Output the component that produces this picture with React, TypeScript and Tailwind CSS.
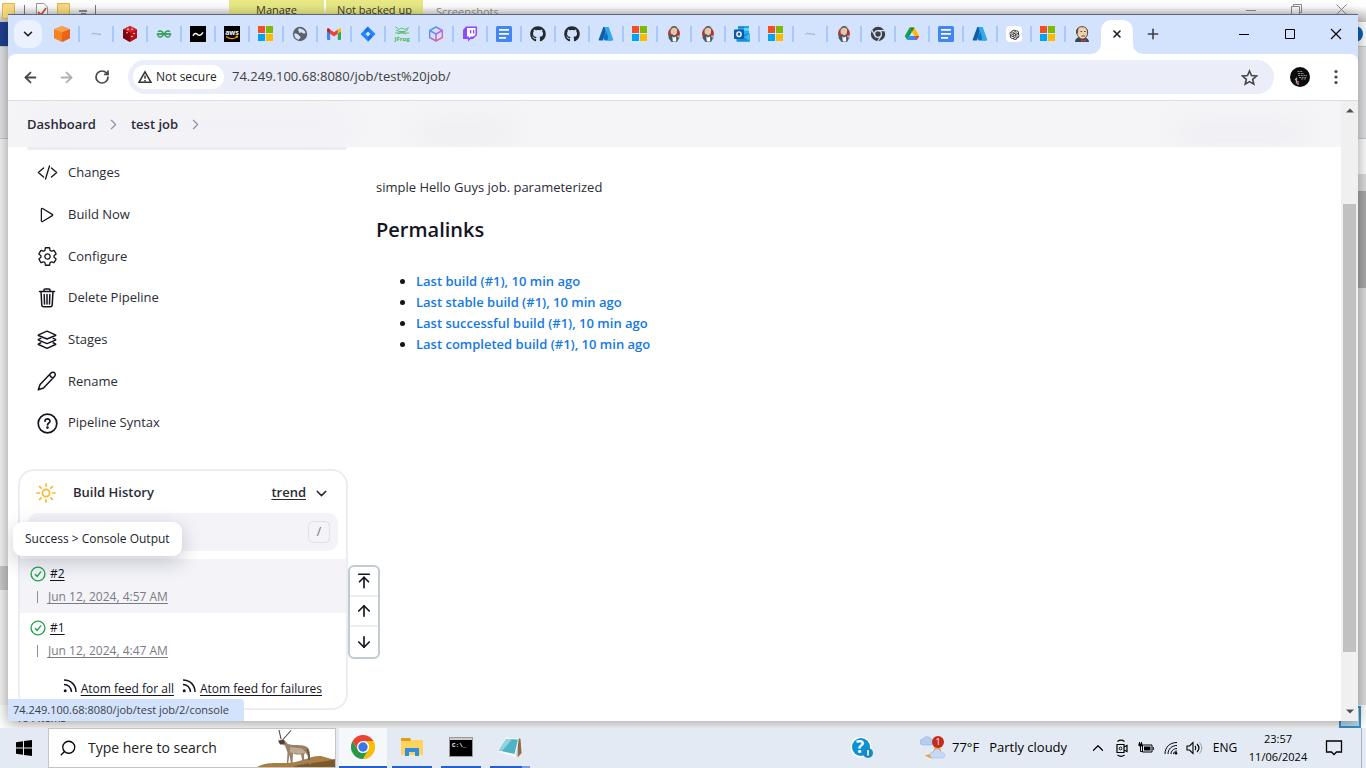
import React from "react";
import { FaGithub } from "react-icons/fa";
import { AiOutlineOpenAI } from "react-icons/ai";
import { IoCodeSlashOutline, IoPlayOutline, IoSettingsOutline } from "react-icons/io5";
import {
  ArrowDown,
  ArrowLeft,
  ArrowRight,
  ArrowUp,
  ArrowUpToLine,
  ChevronDown,
  ChevronRight,
  ChevronUp,
  Minus,
  Plus,
  RotateCw,
  Search,
  X,
} from "lucide-react";

/* ---------- favicons ---------- */

const OrangeCube = () => (
  <svg width="16" height="16" viewBox="0 0 16 16">
    <path d="M8 0l8 3.2v9L8 16l-8-3.800v-9z" fill="#f58220" />
    <path d="M8 0l8 3.200L8 6.500 0 3.200z" fill="#fba047" />
    <path d="M8 6.500l8-3.300v9L8 16z" fill="#e8641b" />
  </svg>
);
const Scribble = () => (
  <svg width="16" height="16" viewBox="0 0 16 16" fill="none" stroke="#7fb0bd" strokeWidth="1">
    <path d="M3.500 8.500l2-1.500 1 1 2-.5 1 .8 2-.4 1.500 1" />
  </svg>
);
const RedCube = () => (
  <svg width="16" height="16" viewBox="0 0 16 16">
    <path d="M8 0l7 3.500v8.500L8 16l-7-4V3.500z" fill="#b80f14" />
    <path d="M8 0l7 3.500L9 6.500 1 3.500z" fill="#d8232a" />
    <path d="M1 3.500L8 7v9l-7-4z" fill="#7b060b" />
    <g fill="#fff">
      <circle cx="6" cy="3.400" r=".8" />
      <circle cx="10" cy="3.200" r=".8" />
      <circle cx="5" cy="6.800" r=".7" />
      <circle cx="12" cy="7.500" r=".8" />
      <circle cx="10" cy="10.500" r=".8" />
    </g>
  </svg>
);
const Geeks = () => (
  <svg width="16" height="16" viewBox="0 0 16 16" fill="none" stroke="#2f9e55" strokeWidth="1.400">
    <path d="M2 5.800C3.500 4.300 7.300 5 7.300 8S3.500 11.700 2.500 10.300C2 9.500 1.900 8.700 2 8h12c.1.700 0 1.500-.5 2.300-1 1.400-4.800.7-4.800-2.300S12.500 4.300 14 5.800" />
    <path d="M.5 8h15" strokeWidth="1" />
  </svg>
);
const BlackWave = () => (
  <svg width="16" height="16" viewBox="0 0 16 16">
    <path d="M0 0h16v16H0z" />
    <path d="M3 9.800c1.500-2.800 3-2.800 4.500-1.300s3.500 1 5.500-2.200" fill="none" stroke="#fff" strokeWidth="1.400" />
  </svg>
);
const Aws = () => (
  <svg width="16" height="16" viewBox="0 0 16 16">
    <path d="M0 0h16v16H0z" />
    <text x="8" y="8.500" textAnchor="middle" fontSize="7" fontWeight="700" fill="#fff" fontFamily="Open Sans, sans-serif">
      aws
    </text>
    <path d="M2 10.500c3.500 2.500 8 2.500 11 .5M11.500 10.200l2-.2-.4 1.800" fill="none" stroke="#f90" strokeWidth="1.100" />
  </svg>
);
const Microsoft = () => (
  <svg width="16" height="16" viewBox="0 0 16 16">
    <path d="M0 0h7v7H0z" fill="#f25022" />
    <path d="M8 0h7v7H8z" fill="#7fba00" />
    <path d="M0 8h7v7H0z" fill="#00a4ef" />
    <path d="M8 8h7v7H8z" fill="#ffb900" />
  </svg>
);
const Globe = () => (
  <svg width="16" height="16" viewBox="0 0 16 16">
    <circle cx="8" cy="8" r="7.200" fill="#5f6368" />
    <path d="M7 2.200c3 .3 5.500 1.500 6.500 4.500-1 1.500-2 .8-3 .2-1.500-.8-3.500.5-3.500-1s-1-1.200-1-2zM2.200 7.500c1.500.2 3.500 0 4.300 1.500.8 1.300 2.200 1 2 2.500-.3 1.300-1.500.8-1.700 2.300C4 13 2 11 2.200 7.500z" fill="#d3e3fd" />
  </svg>
);
const Gmail = () => (
  <svg width="16" height="16" viewBox="0 0 16 16">
    <path d="M1 4.500l3.200 2.400V14H2a1 1 0 01-1-1z" fill="#4285f4" />
    <path d="M15 4.500l-3.200 2.400V14H14a1 1 0 001-1z" fill="#34a853" />
    <path d="M11.800 3.500L13 2.600c.9-.6 2 0 2 1v1.700l-3.200 2.400z" fill="#fbbc04" />
    <path d="M4.200 7.700V3.500L8 6.300l3.800-2.800v4.200L8 10.500z" fill="#ea4335" />
    <path d="M1 5.300V3.600c0-1 1.100-1.600 2-1l1.200.9v4.200z" fill="#c5221f" />
  </svg>
);
const Jira = () => (
  <svg width="16" height="16" viewBox="0 0 16 16">
    <path d="M8 .5L15.500 8 8 15.500.5 8z" fill="#2684ff" />
    <path d="M8 .5L4.200 4.300 8 8.200l1.500-1.500zM8 15.500V11l3-3 1 3.500z" fill="#1a6fe6" />
    <path d="M8 5.500L10.500 8 8 10.500 5.500 8z" fill="#d3e3fd" />
  </svg>
);
const JFrog = () => (
  <svg width="16" height="16" viewBox="0 0 16 16">
    <path d="M1 .5l4 3 3-1.500L11 3.500l4-2M2 4l3 1.500h6l3-2M1 7h14M4 8l4-2 4 2" fill="none" stroke="#43b649" strokeWidth=".8" />
    <text x="8" y="14.500" textAnchor="middle" fontSize="6" fontWeight="700" fill="#43b649" fontFamily="Open Sans, sans-serif">
      JFrog
    </text>
  </svg>
);
const GradientCube = () => (
  <svg width="16" height="16" viewBox="0 0 16 16" fill="none" strokeWidth="1.500" strokeLinejoin="round">
    <defs>
      <linearGradient id="cube" x1="0" y1="0" x2="1" y2="1">
        <stop offset="0" stopColor="#22b8e6" />
        <stop offset=".5" stopColor="#a56bf5" />
        <stop offset="1" stopColor="#ff6a5a" />
      </linearGradient>
    </defs>
    <path d="M8 1l6.300 3.500v7L8 15l-6.300-3.500v-7zM1.700 4.500L8 8l6.300-3.500M8 8v7" stroke="url(#cube)" />
  </svg>
);
const Twitch = () => (
  <svg width="16" height="16" viewBox="0 0 16 16">
    <path d="M4 .5h11v8.500l-4 4H8.500L6 15.500V13H1V4z" fill="#9146ff" />
    <path d="M5 2h8.500v6.500l-2 2H9L7 12.300v-1.800H5z" fill="#fff" />
    <path d="M8 4h1.300v3.500H8zM11 4h1.300v3.500H11z" fill="#9146ff" />
  </svg>
);
const Docs = () => (
  <svg width="16" height="16" viewBox="0 0 16 16">
    <rect width="16" height="16" rx="1.500" fill="#4285f4" />
    <path d="M3 3h10v1.700H3zM3 7h10v1.700H3zM3 11h7v1.700H3z" fill="#fff" />
  </svg>
);
const GitHub = () => <FaGithub size={16} color="#24292f" />;
const Azure = () => (
  <svg width="16" height="16" viewBox="0 0 16 16">
    <path d="M5.300 1h4.200L5 14.500H1.500a.8.800 0 01-.8-1z" fill="#0f5ea8" />
    <path d="M5 10h6l3 4.500H6.500z" fill="#0078d4" />
    <path d="M6.500 1h4.200l4.500 12.500c.2.500-.2 1-.7 1h-4.300L8 7z" fill="#32a9e8" />
    <path d="M8.300 5.500l2 6.500-4.300-.7z" fill="#0f6cbd" />
  </svg>
);
const JenkinsRed = () => (
  <svg width="16" height="16" viewBox="0 0 16 16">
    <ellipse cx="8" cy="7.500" rx="6" ry="6" fill="#b8332c" />
    <ellipse cx="7.800" cy="5" rx="3.300" ry="4.400" fill="#e3c6ad" />
    <path d="M4.300 6C3.800 1.500 6 0 8 0s4.700 1 4 6c-.5-3-1.500-4-4-4.200C6 1.800 4.800 3.500 4.300 6z" fill="#6b625c" />
    <path d="M3 9l3-1 2.500 2L12 8.500l1.500 3L11 16H5.500L2.500 12z" fill="#4c5767" />
    <path d="M6.300 10.500l1.700 1 2-1 .3 5H6.800z" fill="#fff" />
    <path d="M10.500 10l3-1v4z" fill="#a9aeb6" />
  </svg>
);
const Outlook = () => (
  <svg width="16" height="16" viewBox="0 0 16 16">
    <path d="M4 .5h11v8H4z" fill="#28a8ea" />
    <path d="M10 .5h5V5h-5z" fill="#50d9ff" />
    <path d="M4 .5h11v1H4z" fill="#0364b8" />
    <path d="M2.500 9L16 7.500v7.500a.8.800 0 01-.8.800H3.300a.8.800 0 01-.8-.8z" fill="#1490df" />
    <path d="M10 11l6-3.500V15z" fill="#35b8f1" />
    <rect y="3.500" width="10" height="9.500" rx=".8" fill="#0a5aa8" />
    <ellipse cx="5" cy="8.200" rx="2.100" ry="2.300" fill="none" stroke="#fff" strokeWidth="1.400" />
  </svg>
);
const ChromeMono = () => (
  <svg width="16" height="16" viewBox="0 0 16 16">
    <circle cx="8" cy="8" r="7.200" fill="#3c4043" />
    <circle cx="8" cy="8" r="3.400" fill="none" stroke="#d3e3fd" strokeWidth="1.300" />
    <path d="M8 4.600h6.500M5 9.700L1.900 4.300M11 9.700l-3.200 5.500" stroke="#d3e3fd" strokeWidth="1.200" />
  </svg>
);
const Drive = () => (
  <svg width="16" height="16" viewBox="0 0 16 16">
    <path d="M5.600 1.500L8 5.700 3.200 14 .8 10z" fill="#0f9d58" />
    <path d="M5.600 1.500h4.800L15.200 10h-4.800z" fill="#fbbc04" />
    <path d="M5.600 1.500h4.800L8 5.700z" fill="#188038" />
    <path d="M3.200 14l2.400-4h9.600l-2.400 4z" fill="#4285f4" />
    <path d="M10.400 10h4.800l-2.400 4z" fill="#ea4335" />
  </svg>
);
const OpenAI = () => (
  <span className="flex size-4 items-center justify-center rounded-sm bg-white">
    <AiOutlineOpenAI size={13} color="#222" />
  </span>
);
const JenkinsMan = () => (
  <svg width="16" height="16" viewBox="0 0 16 16">
    <path d="M1 16c0-3 2-4.500 5-5l5 .500c2.500 1 4 2 4 4.500z" fill="#33495a" />
    <path d="M2.500 5.500C2.500 2.500 5 .6 8 .6c3.800 0 5.600 2.500 5.600 5.500 0 4-2 7-5.100 7S2.500 9 2.500 5.500z" fill="#eed0ac" stroke="#4a3c34" strokeWidth=".9" />
    <path d="M2.200 8V4.500L4.500 1.800 4 7zM13 3l1.200 4-1.200 2z" fill="#5b5048" />
    <path d="M6.500 5.500h1.700M10 5.500h1.700M7.500 10h3.500" stroke="#4a3c34" strokeWidth=".9" />
    <path d="M7 13l2.500 1.200L12 13v2.800L9.500 15 7 15.800z" fill="#d33833" />
  </svg>
);

const TABS: { name: string; icon: () => React.ReactElement }[] = [
  { name: "AWS resources", icon: OrangeCube },
  { name: "Docs site", icon: Scribble },
  { name: "Redis", icon: RedCube },
  { name: "GeeksforGeeks", icon: Geeks },
  { name: "Wave", icon: BlackWave },
  { name: "AWS", icon: Aws },
  { name: "Microsoft", icon: Microsoft },
  { name: "Web page", icon: Globe },
  { name: "Gmail", icon: Gmail },
  { name: "Jira", icon: Jira },
  { name: "JFrog", icon: JFrog },
  { name: "Cube", icon: GradientCube },
  { name: "Twitch", icon: Twitch },
  { name: "Google Docs", icon: Docs },
  { name: "GitHub", icon: GitHub },
  { name: "GitHub", icon: GitHub },
  { name: "Azure", icon: Azure },
  { name: "Microsoft", icon: Microsoft },
  { name: "Jenkins", icon: JenkinsRed },
  { name: "Jenkins", icon: JenkinsRed },
  { name: "Outlook", icon: Outlook },
  { name: "Microsoft", icon: Microsoft },
  { name: "Docs site", icon: Scribble },
  { name: "Jenkins", icon: JenkinsRed },
  { name: "Chrome Web Store", icon: ChromeMono },
  { name: "Google Drive", icon: Drive },
  { name: "Google Docs", icon: Docs },
  { name: "Azure", icon: Azure },
  { name: "ChatGPT", icon: OpenAI },
  { name: "Microsoft", icon: Microsoft },
  { name: "Jenkins", icon: JenkinsMan },
];

/* ---------- file manager behind the browser ---------- */

const Folder = () => (
  <svg width="14" height="16" viewBox="0 0 14 16" className="shrink-0">
    <path d="M.5.500h12v11l1 1v3H.500z" fill="#fbdc83" stroke="#e0b64e" />
  </svg>
);

function FileManager() {
  return (
    <div className="absolute inset-0 bottom-10 flex flex-col bg-white">
      <div className="flex h-[22px] items-start bg-gradient-to-b from-white from-30% to-[#c4c4c4] text-[11px] leading-5 text-[#3a3a2a]">
        <div className="flex w-[229px] items-start gap-[8px] pt-[3px] pl-[2px]">
          <Folder />
          <span className="mt-[2px] h-3 w-px bg-[#777]" />
          <svg width="14" height="16" viewBox="0 0 14 16" className="ml-[2px]">
            <path d="M1.500.500h7.500l3.500 3.500v12h-11z" fill="#fff" stroke="#999" />
            <path d="M3 9l3 3 5-7" fill="none" stroke="#d8502a" strokeWidth="1.800" />
          </svg>
          <Folder />
          <svg width="8" height="10" viewBox="0 0 8 10" className="mt-[6px]">
            <path d="M0 2h8M2 5h5" stroke="#222" strokeWidth="1.200" />
          </svg>
          <span className="mt-[2px] h-3 w-px bg-[#777]" />
        </div>
        <div className="h-full w-[95px] bg-[#e9ea86] text-center">Manage</div>
        <div className="ml-[2px] h-full w-[97px] bg-[#e9ea86] text-center">Not backed up</div>
        <div className="ml-[13px] pt-[2px] text-[#8c8c8c]">Screenshots</div>
        <div className="ml-auto flex items-center gap-[34px] pt-1 pr-[19px] text-[#8a8a8a]">
          <svg width="11" height="11" viewBox="0 0 11 11" fill="none" stroke="currentColor">
            <path d="M0 6.500h10" />
          </svg>
          <svg width="11" height="11" viewBox="0 0 11 11" fill="none" stroke="currentColor">
            <path d="M.500 2.500h8v8h-8zM2.500 2.500v-2h8v8h-2" />
          </svg>
          <svg width="11" height="11" viewBox="0 0 11 11" fill="none" stroke="currentColor">
            <path d="M.500.500l10 10M10.500.500l-10 10" />
          </svg>
        </div>
      </div>
      <div className="flex h-6 justify-between bg-gradient-to-r from-[#1f4092] from-50% to-white to-50%">
        <span />
        <span className="mt-1 mr-[3px] size-4 rounded-full bg-[#0a63b8]" />
      </div>
      <div className="h-[93px] border-y border-[#c9c9c9] bg-[#e2e3e6]" />
      <div className="flex flex-1 justify-between">
        <div className="flex w-4 flex-col bg-[#f4f4f4]">
          <span className="mt-[427px] h-6 bg-[#cacaca]" />
        </div>
        <div className="mt-[35px] w-4 bg-[#dedede] pt-[17px]">
          <div className="h-[97px] bg-[#a9a9a9]" />
        </div>
      </div>
      <div className="flex h-[23px] items-end justify-between pr-[5px] pl-4 text-[11px] leading-4 text-[#1c3c63]">
        <span className="pb-[2px]">104 items</span>
        <span className="h-[22px] w-[22px] border-2 border-[#3a94c9] bg-[#b9dcf0]" />
      </div>
    </div>
  );
}

/* ---------- browser chrome ---------- */

function TabStrip() {
  return (
    <div className="flex h-[39px] items-center bg-[#d3e3fd] pr-[15px] pb-[1px] pl-[6px]">
      <button aria-label="Search tabs" className="mr-1 flex size-7 shrink-0 items-center justify-center rounded-[10px] bg-[#ebf2fe] text-[#1f1f1f]">
        <ChevronDown size={14} strokeWidth={2.800} />
      </button>
      {TABS.map((tab, i) => (
        <button
          key={i}
          aria-label={tab.name}
          className={
            i === TABS.length - 1
              ? "flex h-4 w-[34px] shrink-0 items-center pl-2"
              : "flex h-4 w-[34px] shrink-0 items-center border-r-2 border-[#a8c7fa] pl-2"
          }
        >
          <tab.icon />
        </button>
      ))}
      <div className="relative -mb-px ml-px flex h-[34px] w-8 shrink-0 items-center justify-center self-end rounded-t-[10px] bg-white">
        <svg width="10" height="10" viewBox="0 0 10 10" className="absolute bottom-0 -left-[10px]">
          <path d="M10 0v10H0A10 10 0 0010 0z" fill="#fff" />
        </svg>
        <button aria-label="Close tab" className="pb-[6px] text-[#1f1f1f]">
          <X size={12} strokeWidth={3.200} />
        </button>
        <svg width="10" height="10" viewBox="0 0 10 10" className="absolute -right-[10px] bottom-0">
          <path d="M0 0v10h10A10 10 0 010 0z" fill="#fff" />
        </svg>
      </div>
      <button aria-label="New tab" className="ml-3 text-[#3c4043]">
        <Plus size={16} strokeWidth={2.400} />
      </button>
      <div className="ml-auto flex items-center gap-8 text-black">
        <button aria-label="Minimize">
          <svg width="14" height="14" viewBox="0 0 14 14"><path d="M2 7.500h10" stroke="#000" /></svg>
        </button>
        <button aria-label="Maximize">
          <svg width="14" height="14" viewBox="0 0 14 14"><path d="M2.500 2.500h9v9h-9z" fill="none" stroke="#000" /></svg>
        </button>
        <button aria-label="Close">
          <svg width="14" height="14" viewBox="0 0 14 14"><path d="M2 2l10 10M12 2L2 12" stroke="#000" strokeWidth="1.100" /></svg>
        </button>
      </div>
    </div>
  );
}

function Toolbar() {
  return (
    <div className="bg-[#d3e3fd]">
      <div className="flex h-[47px] items-center rounded-t-[8px] border-b border-[#dcdde1] bg-white pr-3 pl-[14px] text-[#474747]">
        <button aria-label="Back"><ArrowLeft size={17} strokeWidth={2.500} /></button>
        <button aria-label="Forward" className="ml-[19px] text-[#b0b0b0]"><ArrowRight size={17} strokeWidth={2.500} /></button>
        <button aria-label="Reload" className="ml-[19px]"><RotateCw size={16} strokeWidth={2.600} /></button>
        <div className="ml-[18px] flex h-[34px] flex-1 items-center rounded-full bg-[#ebeef8] pr-4 pl-[5px]">
          <button className="flex h-6 w-[91px] items-center gap-1 rounded-full bg-white pl-[5px] text-xs whitespace-nowrap text-[#1f1f1f]">
            <svg width="14" height="14" viewBox="0 0 14 14" fill="none" stroke="#333" strokeWidth="1.500">
              <path d="M7 1.800L13 12.300H1zM7 5.500v3.300M7 10v1.300" />
            </svg>
            Not secure
          </button>
          <input
            aria-label="Address"
            readOnly
            value="74.249.100.68:8080/job/test%20job/"
            className="ml-2 min-w-0 flex-1 bg-transparent text-[13px] text-[#3c4043] outline-none"
          />
          <button aria-label="Bookmark">
            <svg width="17" height="17" viewBox="0 0 17 17" fill="none" stroke="currentColor" strokeWidth="1.600">
              <path d="M8.500 2l2 4.500 4.900.5-3.700 3.300 1.100 4.800-4.300-2.500-4.300 2.500 1.100-4.800L1.600 7l4.900-.5z" />
            </svg>
          </button>
        </div>
        <button aria-label="Profile" className="ml-4 size-5">
          <svg width="20" height="20" viewBox="0 0 20 20">
            <circle cx="10" cy="10" r="10" fill="#0b0b0b" />
            <path d="M7.500 4.500h5M8 6.500h6M8 8.500h9M9 10.500h8M11 12h5" stroke="#8d8d8d" strokeWidth="1.200" strokeDasharray="2 .7" />
            <path d="M5 13l1.500-1.500v5M8 14v4" stroke="#aaa" strokeWidth="1.300" fill="none" />
            <circle cx="8" cy="15" r="1" fill="#c23a4b" />
          </svg>
        </button>
        <button aria-label="Menu" className="ml-4">
          <svg width="20" height="16" viewBox="0 0 20 16" fill="#474747">
            <circle cx="10" cy="2.500" r="1.600" />
            <circle cx="10" cy="8" r="1.600" />
            <circle cx="10" cy="13.500" r="1.600" />
          </svg>
        </button>
      </div>
    </div>
  );
}

/* ---------- Jenkins page ---------- */

const TrashIcon = () => (
  <svg width="20" height="20" viewBox="0 0 20 20" fill="none" stroke="currentColor" strokeWidth="1.500" strokeLinecap="round" strokeLinejoin="round">
    <path d="M2.500 3.500h15M4 3.500l.8 13.600c.1 1 .8 1.700 1.800 1.700h6.800c1 0 1.700-.7 1.800-1.700L16 3.500M7 3.500V2c0-.600.400-1 1-1h4c.600 0 1 .400 1 1v1.500M10 6.500v9.500M7.200 6.500l.300 9.500M12.800 6.500l-.3 9.500" />
  </svg>
);
const LayersIcon = () => (
  <svg width="20" height="20" viewBox="0 0 20 20" fill="none" stroke="currentColor" strokeWidth="1.400" strokeLinejoin="round">
    <path d="M10 1.200l8.500 3.600c.4.200.4.500 0 .700L10 9 1.500 5.500c-.4-.2-.4-.5 0-.700z" />
    <path d="M4.300 8.100l-2.800 1.300c-.4.200-.4.500 0 .7L10 13.600l8.500-3.500c.4-.2.4-.500 0-.700l-2.800-1.300M4.300 12.500l-2.800 1.300c-.4.200-.4.500 0 .700L10 18.300l8.500-3.800c.4-.2.4-.5 0-.700l-2.800-1.300" />
  </svg>
);
const PencilIcon = () => (
  <svg width="20" height="20" viewBox="0 0 20 20" fill="none" stroke="currentColor" strokeWidth="1.500" strokeLinejoin="round">
    <path d="M1.300 18.700l1.800-5.200L14 2c1.200-1.200 2.800-1 3.500-.2.900.8 1.100 2.500 0 3.600L6.500 17zM12.800 3.300c.1 2 1.500 3.400 3.500 3.500" />
  </svg>
);
const HelpIcon = () => (
  <svg width="21" height="21" viewBox="0 0 21 21" fill="none" stroke="currentColor" strokeWidth="1.700" strokeLinecap="round">
    <circle cx="10.500" cy="10.500" r="9.300" />
    <path d="M8 8.200c0-3.300 5.300-3 5 .2-.2 1.600-2.400 1.700-2.500 3.500" />
    <circle cx="10.500" cy="14.600" r=".5" fill="currentColor" />
  </svg>
);
const SunIcon = () => (
  <svg width="20" height="20" viewBox="0 0 20 20" fill="none" stroke="#fbb62f" strokeWidth="1.700" strokeLinecap="round">
    <circle cx="10" cy="10" r="3.600" />
    <path d="M10 1v2.200M10 16.800V19M1 10h2.200M16.800 10H19M3.600 3.600l1.600 1.600M14.800 14.800l1.600 1.600M3.600 16.400l1.600-1.600M14.800 5.200l1.600-1.600" />
  </svg>
);

const TASKS = [
  { label: "Changes", icon: <IoCodeSlashOutline size={21} /> },
  { label: "Build Now", icon: <IoPlayOutline size={20} /> },
  { label: "Configure", icon: <IoSettingsOutline size={21} /> },
  { label: "Delete Pipeline", icon: <TrashIcon /> },
  { label: "Stages", icon: <LayersIcon /> },
  { label: "Rename", icon: <PencilIcon /> },
  { label: "Pipeline Syntax", icon: <HelpIcon /> },
];

const BUILDS = [
  { id: "#2", date: "Jun 12, 2024, 4:57 AM", active: true },
  { id: "#1", date: "Jun 12, 2024, 4:47 AM", active: false },
];

const PERMALINKS = ["Last build (#1), 10 min ago", "Last stable build (#1), 10 min ago", "Last successful build (#1), 10 min ago", "Last completed build (#1), 10 min ago"];

const CheckCircle = () => (
  <svg width="16" height="16" viewBox="0 0 16 16" fill="none" stroke="#1ea64b" strokeWidth="1.400" strokeLinecap="round" strokeLinejoin="round">
    <circle cx="8" cy="8" r="6.900" />
    <path d="M5.300 8.500l1.900 1.900 3.500-4.500" />
  </svg>
);
const Feed = () => (
  <svg width="14" height="14" viewBox="0 0 14 14" fill="none" stroke="currentColor" strokeWidth="1.500">
    <circle cx="2.200" cy="11.800" r="1.500" fill="currentColor" stroke="none" />
    <path d="M1 5.500c4 0 7.300 3 7.500 7.500M1 1c7 0 12 5 12 12" />
  </svg>
);

function BuildHistory() {
  return (
    <section className="relative mt-[25px] ml-[-1px] h-[241px] w-[330px] rounded-[16px] border-2 border-[#ececf4] bg-white">
      <header className="flex h-[42px] items-center pt-[2px] pr-[16px] pl-4 text-[13px] font-semibold text-[#2b2b36]">
        <SunIcon />
        <h2 className="ml-[17px]">Build History</h2>
        <a href="#trend" className="ml-auto underline underline-offset-2">trend</a>
        <button aria-label="Collapse" className="ml-[7px]"><ChevronDown size={17} strokeWidth={2} /></button>
      </header>
      <label className="mx-2 flex h-[38px] items-center rounded-[10px] bg-[#f3f3f8] pr-2">
        <input aria-label="Filter builds" className="min-w-0 flex-1 bg-transparent pl-3 text-[13px] outline-none" />
        <kbd className="flex size-[22px] items-center justify-center rounded-[5px] border border-[#e0e0e9] font-['Open_Sans'] text-xs text-[#6b6b80]">/</kbd>
      </label>
      <table className="mt-2 w-full text-xs">
        <tbody>
          {BUILDS.map((b) => (
            <tr key={b.id} className={b.active ? "bg-[#f3f3f8]" : ""}>
              <td className="h-[54px] p-0 pl-[10px] align-top">
                <div className="flex items-center gap-1 pt-[6px] leading-[18px] text-[#14141f]">
                  <CheckCircle />
                  <a href="#build" className="underline underline-offset-2">{b.id}</a>
                </div>
                <div className="ml-[7px] flex items-center gap-[10px] pt-1 leading-5 text-[#7b7b85]">
                  <span className="h-3 w-px bg-[#8a9199]" />
                  <a href="#build" className="underline underline-offset-2">{b.date}</a>
                </div>
              </td>
            </tr>
          ))}
        </tbody>
      </table>
      <footer className="flex justify-end gap-2 pt-3 pr-6 text-xs leading-5 text-[#14141f]">
        <a href="#all" className="flex gap-1"><Feed /><span className="underline underline-offset-2">Atom feed for all</span></a>
        <a href="#failures" className="flex gap-1"><Feed /><span className="underline underline-offset-2">Atom feed for failures</span></a>
      </footer>
      <div role="tooltip" className="absolute top-[51px] -left-[7px] flex h-[34px] items-center rounded-[9px] bg-white px-3 text-xs whitespace-nowrap text-[#22222e] shadow-[0_6px_20px_rgba(20,20,50,0.22)]">
        Success &gt; Console Output
      </div>
      <div className="absolute top-[94px] left-[328px] flex w-8 flex-col divide-y-2 divide-[#ededf0] rounded-[6px] border-2 border-[#c1cbd0] bg-white text-[#14141f]">
        <button aria-label="Newest builds" className="flex h-[30px] items-center justify-center"><ArrowUpToLine size={18} strokeWidth={2.200} /></button>
        <button aria-label="Newer builds" className="flex h-[30px] items-center justify-center"><ArrowUp size={18} strokeWidth={2.200} /></button>
        <button aria-label="Older builds" className="flex h-[30px] items-center justify-center"><ArrowDown size={18} strokeWidth={2.200} /></button>
      </div>
    </section>
  );
}

function JenkinsPage() {
  return (
    <div className="flex min-w-0 flex-1 flex-col overflow-hidden bg-white text-[#14141f]">
      <nav className="relative flex h-[46px] shrink-0 items-center overflow-hidden bg-[#f5f5f8] pt-[1px] pl-[19px] text-[13px] font-semibold text-[#2b2b36]">
        <span className="absolute top-2 left-5 h-9 w-80 rounded-full bg-[#f1f1f6] blur-md" />
        <span className="absolute top-5 left-[410px] h-6 w-24 rounded-full bg-[#eeeef2] blur-md" />
        <span className="absolute top-5 right-9 h-6 w-32 rounded-full bg-[#eeeef3] blur-md" />
        <a href="#dashboard" className="relative">Dashboard</a>
        <ChevronRight size={17} strokeWidth={1.600} className="relative mx-[9px] text-[#8e8ea6]" />
        <a href="#job" className="relative">test job</a>
        <ChevronRight size={17} strokeWidth={1.600} className="relative mx-[9px] text-[#8e8ea6]" />
      </nav>
      <div className="flex min-h-0 flex-1">
        <aside className="w-[349px] shrink-0 pl-[11px]">
          <div className="mx-2 h-[3px] w-[320px] rounded-b-[8px] bg-[#ebebf1]" />
          <nav className="mt-[2px] grid h-[292px] grid-rows-7">
            {TASKS.map((t) => (
              <a key={t.label} href="#task" className="flex items-center pl-[17px] text-[13px] text-[#2b2b36]">
                <span className="flex w-[22px] justify-center text-[#14141f]">{t.icon}</span>
                <span className="ml-[10px]">{t.label}</span>
              </a>
            ))}
          </nav>
          <BuildHistory />
        </aside>
        <main className="flex-1 pt-[30px] pl-[19px]">
          <p className="text-[13px] leading-5 text-[#2b2b36]">simple Hello Guys job. parameterized</p>
          <h2 className="mt-[18px] text-xl leading-[30px] font-semibold">Permalinks</h2>
          <ul className="mt-[26px] list-disc pl-10 text-[13px] leading-[21px] font-semibold text-[#14141f]">
            {PERMALINKS.map((p) => (
              <li key={p}><a href="#permalink" className="text-[#1379e6]">{p}</a></li>
            ))}
          </ul>
        </main>
      </div>
    </div>
  );
}

function Browser() {
  return (
    <div className="absolute inset-x-2 top-[14px] bottom-[47px] flex flex-col border-t border-[#5f6578] bg-white shadow-[0_2px_14px_rgba(0,0,0,0.4)]">
      <TabStrip />
      <Toolbar />
      <div className="flex min-h-0 flex-1">
        <JenkinsPage />
        <div className="flex w-[17px] flex-col items-center bg-[#f0f0f0] py-[7px]">
          <svg width="8" height="5" viewBox="0 0 8 5"><path d="M0 4.500L4 .500l4 4z" fill="#505050" /></svg>
          <div className="mt-[91px] min-h-0 w-[13px] flex-[448] bg-[#c1c1c1]" />
          <div className="flex-[57]" />
          <svg width="8" height="5" viewBox="0 0 8 5"><path d="M0 .500l4 4 4-4z" fill="#505050" /></svg>
        </div>
      </div>
      <div className="absolute bottom-0 left-0 flex h-[22px] w-[236px] items-center rounded-tr-[4px] bg-[#d3e3fd] pl-[5px] text-[11px] whitespace-nowrap text-[#3c4043]">
        74.249.100.68:8080/job/test job/2/console
      </div>
    </div>
  );
}

/* ---------- taskbar ---------- */

const ChromeColor = () => (
  <svg width="24" height="24" viewBox="0 0 24 24">
    <path d="M1.600 6A12 12 0 0122.400 6H12z" fill="#ea4335" />
    <path d="M22.400 6A12 12 0 0112 24l5.200-9A6 6 0 0012 6z" fill="#fbbc04" />
    <path d="M1.600 6l5.200 9L12 6z" fill="#ea4335" />
    <path d="M1.600 6A12 12 0 0012 24l5.200-9A6 6 0 016.800 15z" fill="#2a9a48" />
    <circle cx="12" cy="12" r="6" fill="#fff" />
    <circle cx="12" cy="12" r="4.700" fill="#3b78e7" />
  </svg>
);
const Explorer = () => (
  <svg width="22" height="20" viewBox="0 0 22 20">
    <path d="M0 1h9l1 2h12v15H0z" fill="#ffd45e" />
    <path d="M0 1h9l1 2-1 1H0z" fill="#dba016" />
    <path d="M4 11h14v8h-4v-4H8v4H4z" fill="#2f8fdd" />
  </svg>
);
const Terminal = () => (
  <svg width="24" height="20" viewBox="0 0 24 20">
    <path d="M.500.500h23v19H.500z" fill="#000" stroke="#999" />
    <path d="M1 1h22v2H1z" fill="#ccc" />
    <text x="3" y="10" fontSize="6" fontWeight="700" fill="#fff" fontFamily="Liberation Mono, monospace">C:\_</text>
  </svg>
);
const Notepad = () => (
  <svg width="24" height="22" viewBox="0 0 24 22">
    <path d="M8 1l14 1 1.500 15-4 4.500z" fill="#c9c4b8" />
    <path d="M20 2l2.500 1L23.500 17l-3.500 4z" fill="#8b6d4c" />
    <path d="M8 1l13 1-3.500 19.500L0 16z" fill="#f4f8fa" />
    <path d="M8 3l12 .500-3.500 14.500L1 14.500z" fill="#4fb3c8" />
    <path d="M8 3l6 .300L4 15l-3-.500z" fill="#8fd3df" />
  </svg>
);

const APPS = [
  { name: "Google Chrome", icon: <ChromeColor />, tile: "bg-[#f5f8fb]", bar: "w-12" },
  { name: "File Explorer", icon: <Explorer />, tile: "", bar: "w-10" },
  { name: "Command Prompt", icon: <Terminal />, tile: "", bar: "w-10" },
  { name: "Notepad", icon: <Notepad />, tile: "", bar: "w-10 border-r-8 border-[#7f9ddd]" },
];

function Taskbar() {
  return (
    <div className="absolute inset-x-0 bottom-0 flex h-10 items-center bg-[#e4eaf3] pr-1 text-black">
      <button aria-label="Start" className="flex w-12 justify-center">
        <svg width="16" height="16" viewBox="0 0 16 16"><path d="M0 2.200L7 1.200v6.300H0zM8 1l8-1v7.500H8zM0 8.500h7v6.300l-7-1zM8 8.500h8V16l-8-1z" /></svg>
      </button>
      <label className="relative flex h-10 w-72 items-center overflow-hidden border border-[#c4c4c4] bg-white pl-[10px]">
        <Search size={18} strokeWidth={1.700} className="-scale-x-100" />
        <input aria-label="Search Windows" placeholder="Type here to search" className="ml-[11px] w-36 text-sm text-[#222] outline-none placeholder:text-[#222]" />
        <svg width="78" height="38" viewBox="0 0 78 38" className="absolute right-0 bottom-0">
          <path d="M0 38c8-5 18-4 28-4 16 0 26-8 36-7l14 4v7z" fill="#a87e45" />
          <path d="M36 38c12-5 24-3 42-8v8z" fill="#7d5a2e" />
          <path d="M23 11c2-1.500 4-1 5 1l3 3c6 2 13 0 18 2.500 4 2 4 6 4 10l1 8h-1.500l-2-9-2-3-1.500 2 .5 10h-1.500l-2-10c-4 0-6 0-8-1l-.5 11H34l-1.500-10-1.500 10h-1.200l.7-12-2.500-7-5-1.500z" fill="#9a8069" />
          <path d="M33 18l12 1.500 4 4c-5 2-11 1-16 0z" fill="#bfa995" />
          <path d="M24 10L22 1M26 10.500L34 1.500M50 20l2 6v5" fill="none" stroke="#54453a" strokeWidth="1.100" />
          <path d="M21 11.500l6-.500 1 3.500-5 1z" fill="#4d4038" />
        </svg>
      </label>
      <div className="ml-[3px] flex h-10 gap-px">
        {APPS.map((a) => (
          <button key={a.name} aria-label={a.name} className={`flex w-12 flex-col items-center justify-end ${a.tile}`}>
            <span className="flex flex-1 items-center">{a.icon}</span>
            <span className={`h-[2px] bg-[#2660cf] ${a.bar}`} />
          </button>
        ))}
      </div>
      <div className="ml-auto flex items-center">
        <svg width="22" height="22" viewBox="0 0 22 22" className="mr-[47px]">
          <circle cx="10" cy="10" r="10.500" fill="#fff" />
          <circle cx="10" cy="10" r="9" fill="#0a93d4" />
          <text x="9" y="16" textAnchor="middle" fontSize="17" fontWeight="700" fill="#fff" fontFamily="Open Sans, sans-serif">?</text>
          <circle cx="17" cy="16" r="5" fill="#1b87c4" />
          <path d="M17 13v5.500" stroke="#fff" strokeWidth="1.600" />
        </svg>
        <svg width="26" height="24" viewBox="0 0 26 24">
          <path d="M14 8c2 6-2 11-9 11 4 5 14 4 16-3 1-4-3-8-7-8z" fill="#f5a12b" />
          <path d="M3 9a3 3 0 010-6c1-3 7-3 8 0 3 0 4 5 1 6z" fill="#b5cdf3" stroke="#8eb0e8" strokeWidth=".6" />
          <path d="M13 22a3 3 0 010-6c1-4 7-4 8 0 4 0 5 5 2 6z" fill="#c5d9f7" stroke="#9dbcec" strokeWidth=".6" />
          <circle cx="18" cy="6" r="6" fill="#c42b1c" />
          <text x="18" y="9" textAnchor="middle" fontSize="9" fill="#fff" fontFamily="Open Sans, sans-serif">1</text>
        </svg>
        <span className="ml-[6px] flex w-[138px] gap-[10px] text-[13px] whitespace-nowrap"><span>77°F</span><span>Partly cloudy</span></span>
        <ChevronUp size={18} strokeWidth={1.600} className="-ml-px" />
        <svg width="12" height="18" viewBox="0 0 12 18" fill="none" stroke="#000" className="ml-[9px]">
          <path d="M1 5.500h7v8H1zM8 8l3-1.500v6L8 11M1.500 2.500c2-1.500 5-1.500 7 0M1.500 16c2 1.500 5 1.500 7 0" strokeWidth="1.200" />
          <circle cx="4.500" cy="9.500" r="1.400" />
        </svg>
        <svg width="16" height="14" viewBox="0 0 16 14" fill="none" stroke="#000" className="ml-[10px]">
          <path d="M4.500 4H14v7H4.500zM15.300 6v3" strokeWidth="1" />
          <path d="M6 5.500h6.500v4H6z" fill="#000" stroke="none" />
          <path d="M.5 2.500h4v2l-1 1h-2l-1-1z" fill="#000" stroke="none" />
          <path d="M1.500 1v2M3.500 1v2M2.500 5v5.500h2" />
        </svg>
        <svg width="14" height="14" viewBox="0 0 14 14" fill="none" stroke="#000" className="ml-[10px]">
          <path d="M1 13C1 6 6 1.500 13 1.500M4 13c0-5 4-8.500 9-8.500M7 13c0-3 2.500-5.500 6-5.500M9.500 13c0-1.500 1.500-3 3.500-3" strokeWidth="1" />
          <circle cx="12" cy="12.300" r="1.300" fill="#000" stroke="none" />
        </svg>
        <svg width="17" height="14" viewBox="0 0 17 14" fill="none" stroke="#000" className="ml-2">
          <path d="M1 5h2.500L7 1.500v11L3.500 9H1zM9 5c1 1 1 3 0 4M11 3c2.500 2.500 2.500 5.500 0 8" strokeWidth="1.100" />
          <path d="M13.500 1.500c3 3.500 3 7.500 0 11" stroke="#999" />
        </svg>
        <span className="w-11 text-center text-xs">ENG</span>
        <div className="w-[62px] text-center text-[11px] leading-[18px]"><div>23:57</div><div>11/06/2024</div></div>
        <svg width="18" height="18" viewBox="0 0 18 18" fill="none" stroke="#000" strokeWidth="1.300" className="mr-[18px] ml-4">
          <path d="M1.500 2h15v11H11.500L9 15.500 6.500 13h-5z" />
        </svg>
      </div>
      <span className="h-10 w-px bg-[#a9b4c6]" />
    </div>
  );
}

export default function App() {
  return (
    <div className="relative h-screen overflow-hidden bg-white font-['Open_Sans','Noto_Sans',sans-serif]">
      <FileManager />
      <Browser />
      <Taskbar />
    </div>
  );
}
